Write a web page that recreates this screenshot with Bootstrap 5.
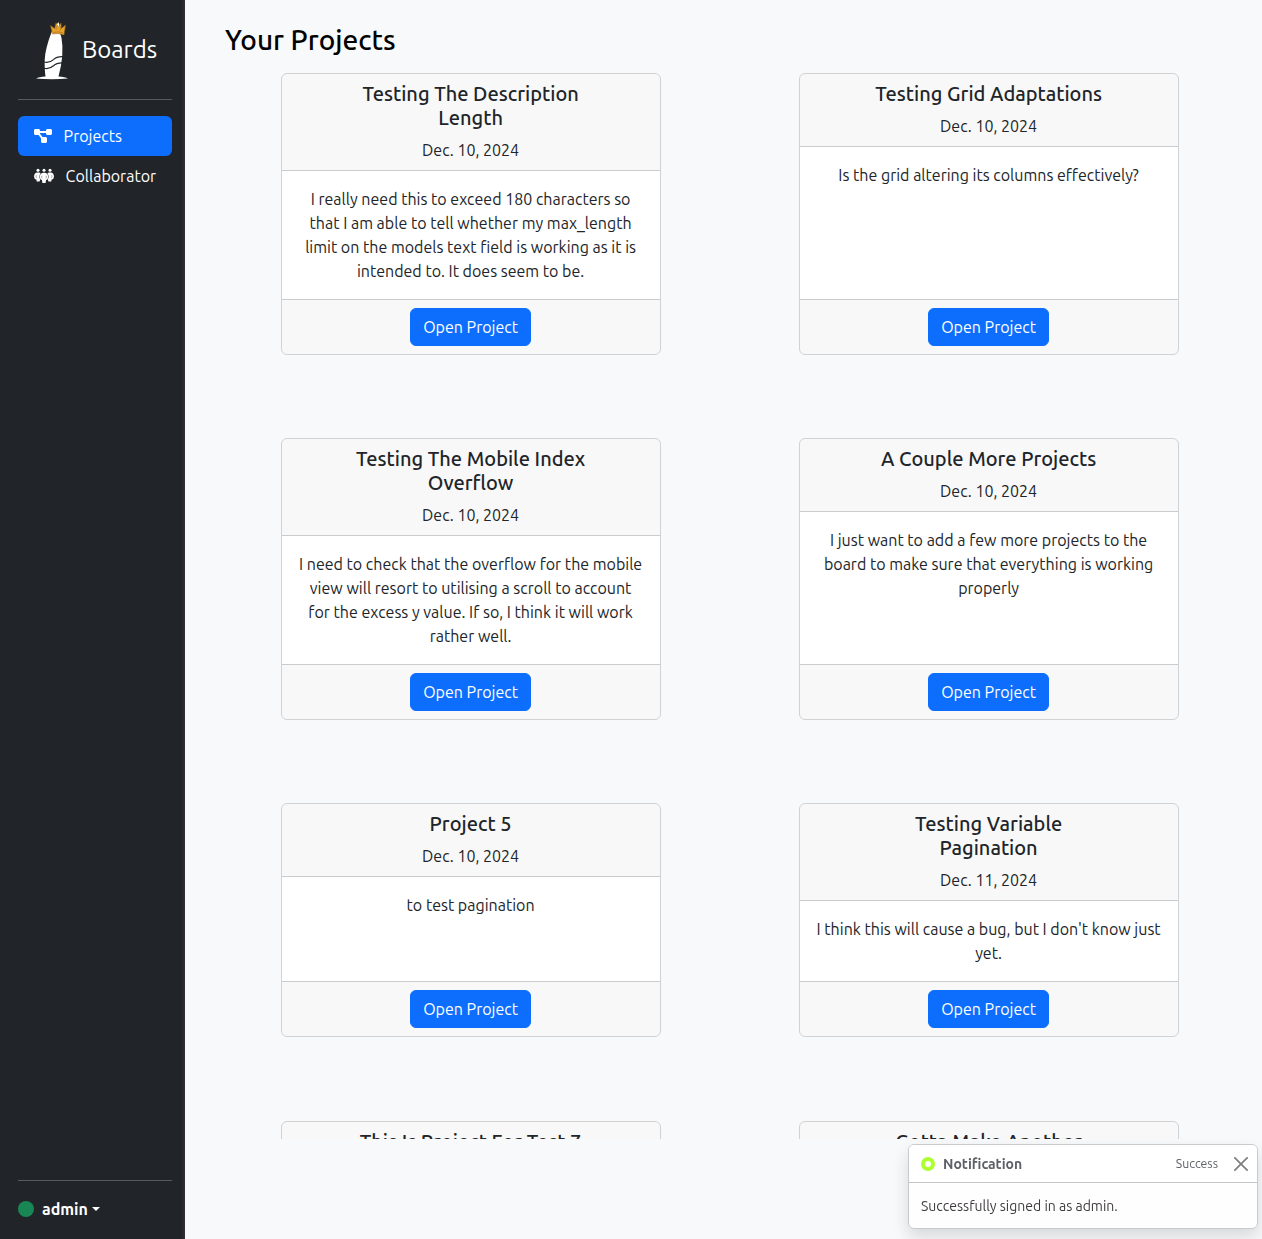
<!DOCTYPE html>
<html lang="en">
<head>
<meta charset="utf-8">
<meta name="viewport" content="width=device-width, initial-scale=1">
<title>Boards</title>
<link href="https://cdn.jsdelivr.net/npm/bootstrap@5.3.0/dist/css/bootstrap.min.css" rel="stylesheet">
<style>
  body { font-family: Ubuntu, "Noto Sans", sans-serif; overflow: hidden; }
  .side-panel { width: 185px; padding: 16px 13px 14px 18px; box-shadow: inset -4px 0 3px -2px #372e33; }
  .side-panel hr { border-color: #fff; opacity: .25; }
  .brand-link { height: 67px; padding-left: 18px; font-size: 24px; }
  .brand-link svg { margin: 5px 14px 0 0; }
  .side-panel .nav-link { white-space: nowrap; }
  .side-panel .nav-link span { margin-left: 3.6px; }
  .status-dot { width: 16px; height: 16px; }
  .page-title { font-size: 28px; line-height: 33.6px; color: #000; margin: 23px 0 0 40px; }
  .board-scroll { margin-top: 8.4px; height: 1074px; overflow: hidden; padding: 8px 14.4px 0 26.6px; }
  .board-grid { --bs-gutter-x: 0; row-gap: 83.24px; }
  .project-card { width: 380px; border-color: #d1d2d3; }
  .project-card .card-header, .project-card .card-footer { border-color: #cbcccd; }
  .project-card h5 { padding: 0 50px; }
  .toast { width: 350px; right: 4px; bottom: 10px; border-color: #c8cacc; }
  .toast .toast-header { height: 38px; padding: 9px 12px 8px; color: #5c6166; border-bottom-color: #c3c6c9; }
  .toast .toast-body { color: #3f3a3f; padding: 12.6px 12px 11.4px; }
  .toast .btn-close { margin: 0 -11px 0 8px; padding: 8px; box-sizing: content-box; width: 14px; height: 14px; }
</style>
<script src="https://cdn.jsdelivr.net/npm/bootstrap@5.3.0/dist/js/bootstrap.bundle.min.js"></script>
</head>
<body class="bg-light">
<div class="d-flex vh-100">
  <aside class="side-panel d-flex flex-column flex-shrink-0 text-bg-dark">
    <a href="#" class="brand-link d-flex align-items-center text-white text-decoration-none">
      <svg width="32" height="60" viewBox="0 0 32 60">
        <path fill="#fff" d="M16 9 Q9 27 8.700 38 Q8.500 48 9.500 54.500 Q3 55 0 56.400 Q16 58 32 56.400 Q29 55 22.500 54.500 Q28.500 32 25.500 16 Q24 9 21 8Z"/>
        <path fill="none" stroke="#212529" stroke-width="1.200" d="M8 40 Q13 41.500 17.500 37.600 Q21 34.200 28 34.800 M8 46.200 Q13 47.700 17.500 43.800 Q21 40.400 28 41"/>
        <path fill="#e5a32c" stroke="#8c5b12" stroke-width=".5" d="M16.500 12 L14.500 3.500 L18.600 6.500 L20 .8 L22.600 5 L25 .8 L25.400 6.500 L29.500 3 L28 13 Q22 10.500 16.500 12Z"/>
        <path fill="none" stroke="#b9741a" stroke-width=".8" d="M17.500 10.500 Q22.500 9 27 11 M20.200 4 V7.500 M24.700 4 L24.200 8.500"/>
        <path fill="#fff" d="M21 2.300 L22.300 0 L23.400 2.800 L22.700 5Z"/>
      </svg>
      <span>Boards</span>
    </a>
    <hr>
    <ul class="nav nav-pills flex-column mb-auto">
      <li class="nav-item"><a href="#" class="nav-link active d-flex align-items-center">
        <svg width="18" height="16" viewBox="0 0 576 512" class="me-2"><path fill="#fff" d="M0 80C0 53.500 21.500 32 48 32h96c26.500 0 48 21.500 48 48V96H384V80c0-26.500 21.500-48 48-48h96c26.500 0 48 21.500 48 48v96c0 26.500-21.500 48-48 48H432c-26.500 0-48-21.500-48-48V160H192v16c0 1.700-.1 3.400-.3 5L272 288h96c26.500 0 48 21.500 48 48v96c0 26.500-21.500 48-48 48H272c-26.500 0-48-21.500-48-48V336c0-1.700 .1-3.400 .3-5L144 224H48c-26.500 0-48-21.500-48-48V80z"/></svg>
        <span>Projects</span></a></li>
      <li class="nav-item"><a href="#" class="nav-link text-white d-flex align-items-center">
        <svg width="20" height="16" viewBox="0 0 20 16" class="me-2" fill="#fff">
          <circle cx="4" cy="2.300" r="1.500"/><circle cx="10" cy="2.300" r="1.500"/><circle cx="16" cy="2.300" r="1.500"/>
          <path d="M3.300 4.500 H4.700 Q6.200 4.600 6.600 5.600 Q4.300 8.500 6.300 11.500 L5.500 13.500 H2.700 L2.400 11.600 Q0 11 0 8.500 Q.4 4.700 3.300 4.500Z M16.700 4.500 H15.300 Q13.800 4.600 13.400 5.600 Q15.700 8.500 13.700 11.500 L14.500 13.500 H17.300 L17.600 11.600 Q20 11 20 8.500 Q19.600 4.700 16.700 4.500Z M9 4.700 H11 Q14.200 5.500 14.200 9 Q14.200 11.500 12 12.300 L11.600 15 H8.400 L8 12.300 Q5.800 11.500 5.800 9 Q5.800 5.500 9 4.700Z"/>
          <path stroke="#212529" stroke-width=".4" fill="none" d="M8 7.700 Q7.200 9 8 10.300 M12 7.700 Q12.800 9 12 10.300 M2.500 7.300 Q1.700 8.600 2.500 9.800 M17.500 7.300 Q18.300 8.600 17.500 9.800"/>
        </svg>
        <span>Collaborator</span></a></li>
    </ul>
    <hr>
    <a href="#" class="d-flex align-items-center text-white text-decoration-none dropdown-toggle">
      <span class="status-dot rounded-circle bg-success me-2"></span>
      <strong>admin</strong>
    </a>
    <div class="pb-1"></div>
  </aside>

  <main class="flex-grow-1">
    <h3 class="page-title">Your Projects</h3>
    <div class="board-scroll">
      <div class="row row-cols-2 board-grid text-center">
        <div class="col d-flex justify-content-center"><div class="card project-card">
          <div class="card-header"><h5>Testing The Description<br>Length</h5>Dec. 10, 2024</div>
          <div class="card-body">I really need this to exceed 180 characters so<br>that I am able to tell whether my max_length<br>limit on the models text field is working as it is<br>intended to. It does seem to be.</div>
          <div class="card-footer"><a href="#" class="btn btn-primary">Open Project</a></div>
        </div></div>
        <div class="col d-flex justify-content-center"><div class="card project-card">
          <div class="card-header"><h5>Testing Grid Adaptations</h5>Dec. 10, 2024</div>
          <div class="card-body">Is the grid altering its columns effectively?</div>
          <div class="card-footer"><a href="#" class="btn btn-primary">Open Project</a></div>
        </div></div>
        <div class="col d-flex justify-content-center"><div class="card project-card">
          <div class="card-header"><h5>Testing The Mobile Index<br>Overflow</h5>Dec. 10, 2024</div>
          <div class="card-body">I need to check that the overflow for the mobile<br>view will resort to utilising a scroll to account<br>for the excess y value. If so, I think it will work<br>rather well.</div>
          <div class="card-footer"><a href="#" class="btn btn-primary">Open Project</a></div>
        </div></div>
        <div class="col d-flex justify-content-center"><div class="card project-card">
          <div class="card-header"><h5>A Couple More Projects</h5>Dec. 10, 2024</div>
          <div class="card-body">I just want to add a few more projects to the<br>board to make sure that everything is working<br>properly</div>
          <div class="card-footer"><a href="#" class="btn btn-primary">Open Project</a></div>
        </div></div>
        <div class="col d-flex justify-content-center"><div class="card project-card">
          <div class="card-header"><h5>Project 5</h5>Dec. 10, 2024</div>
          <div class="card-body">to test pagination</div>
          <div class="card-footer"><a href="#" class="btn btn-primary">Open Project</a></div>
        </div></div>
        <div class="col d-flex justify-content-center"><div class="card project-card">
          <div class="card-header"><h5>Testing Variable<br>Pagination</h5>Dec. 11, 2024</div>
          <div class="card-body">I think this will cause a bug, but I don't know just<br>yet.</div>
          <div class="card-footer"><a href="#" class="btn btn-primary">Open Project</a></div>
        </div></div>
        <div class="col d-flex justify-content-center"><div class="card project-card">
          <div class="card-header"><h5>This Is Project For Test 7</h5></div>
        </div></div>
        <div class="col d-flex justify-content-center"><div class="card project-card">
          <div class="card-header"><h5>Gotta Make Another</h5></div>
        </div></div>
      </div>
    </div>
  </main>
</div>

<div class="toast show position-fixed" role="alert">
  <div class="toast-header">
    <svg width="14" height="14" viewBox="0 0 14 14" class="me-2"><circle cx="7" cy="7" r="5" fill="#fff" stroke="#adff2f" stroke-width="4"/></svg>
    <strong class="me-auto">Notification</strong>
    <small>Success</small>
    <button type="button" class="btn-close" aria-label="Close"></button>
  </div>
  <div class="toast-body">Successfully signed in as admin.</div>
</div>
</body>
</html>
